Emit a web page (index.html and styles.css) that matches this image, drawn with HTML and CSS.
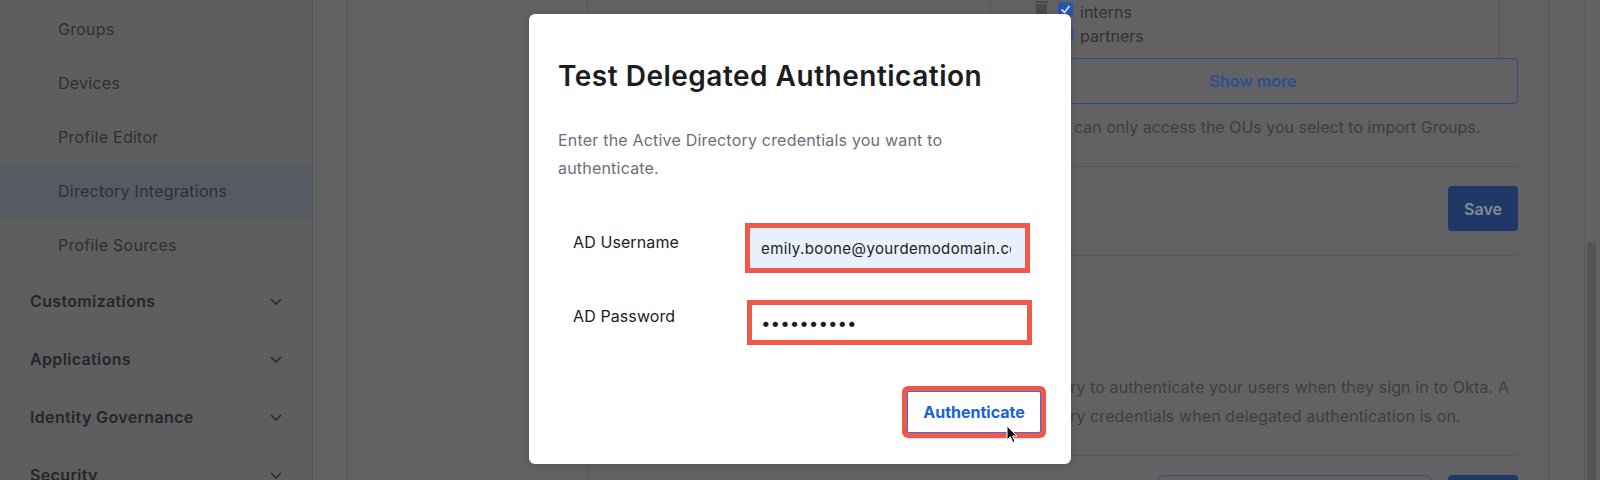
FILE: index.html
```html
<!DOCTYPE html>
<html lang="en">
<head>
<meta charset="utf-8">
<title>Directory Integrations</title>
<link rel="stylesheet" href="styles.css">
</head>
<body>
<div class="app">
  <nav class="sidebar">
    <ul class="nav-list">
      <li class="nav-sub">Groups</li>
      <li class="nav-sub">Devices</li>
      <li class="nav-sub">Profile Editor</li>
      <li class="nav-sub active">Directory Integrations</li>
      <li class="nav-sub">Profile Sources</li>
      <li class="nav-section"><span>Customizations</span><svg class="chev" width="12" height="7" viewBox="0 0 12 7"><polyline points="1,1 6,6 11,1"/></svg></li>
      <li class="nav-section"><span>Applications</span><svg class="chev" width="12" height="7" viewBox="0 0 12 7"><polyline points="1,1 6,6 11,1"/></svg></li>
      <li class="nav-section"><span>Identity Governance</span><svg class="chev" width="12" height="7" viewBox="0 0 12 7"><polyline points="1,1 6,6 11,1"/></svg></li>
      <li class="nav-section"><span>Security</span><svg class="chev" width="12" height="7" viewBox="0 0 12 7"><polyline points="1,1 6,6 11,1"/></svg></li>
    </ul>
  </nav>
  <div class="gutter"></div>
  <main class="main">
    <section class="card">
      <div class="card-left"></div>
      <div class="card-right">
        <div class="ou-list">
          <div class="ou-row"><span class="ou-icon"></span><span class="cb"></span><span>employees</span></div>
          <div class="ou-row">
            <svg class="ou-icon trash" width="15" height="15" viewBox="0 0 15 15"><rect x="1" y="0" width="13" height="2"/><rect x="2" y="3" width="11" height="12"/></svg>
            <span class="cb"><svg width="15" height="15" viewBox="0 0 15 15"><polyline points="3.5,7.5 6.5,10.5 11.5,4"/></svg></span>
            <span>interns</span>
          </div>
          <div class="ou-row">
            <span class="ou-icon"></span>
            <span class="cb"><svg width="15" height="15" viewBox="0 0 15 15"><polyline points="3.5,7.5 6.5,10.5 11.5,4"/></svg></span>
            <span>partners</span>
          </div>
        </div>
        <button class="show-more">Show more</button>
        <p class="help">The agent can only access the OUs you select to import Groups.</p>
        <hr class="rule">
        <div class="save-row"><button class="btn-primary">Save</button></div>
        <hr class="rule">
        <div class="da-section">
          <p class="da-text"><span class="line">Directory to authenticate your users when they sign in to Okta. A</span><span class="line">Directory credentials when delegated authentication is on.</span></p>
        </div>
        <hr class="rule">
        <div class="bottom-row"><div class="fake-input"></div><button class="btn-primary">Test</button></div>
      </div>
    </section>
  </main>
  <div class="scrollbar"><div class="thumb"></div></div>
</div>

<div class="modal" role="dialog">
  <h2 class="modal-title">Test Delegated Authentication</h2>
  <p class="modal-desc">Enter the Active Directory credentials you want to authenticate.</p>
  <div class="form-row">
    <label class="field-label" for="user">AD Username</label>
    <input class="field-input autofill" id="user" type="text" value="emily.boone@yourdemodomain.com">
  </div>
  <div class="form-row row-password">
    <label class="field-label" for="pass">AD Password</label>
    <input class="field-input pass" id="pass" type="password" value="password12">
  </div>
  <div class="modal-actions">
    <button class="btn-auth">Authenticate</button>
  </div>
</div>

<svg class="cursor" width="12" height="19" viewBox="0 0 12 19"><path d="M1 1 L1 15 L4.3 11.8 L6.8 17.5 L9 16.6 L6.6 11 L11 11 Z"/></svg>
</body>
</html>
```

FILE: styles.css
```css
* { box-sizing: border-box; }
html, body { margin: 0; padding: 0; }
body {
  width: 1600px;
  height: 480px;
  overflow: hidden;
  position: relative;
  background: #626264;
  font-family: Inter, "Noto Sans", sans-serif;
}

.app { display: flex; height: 480px; overflow: hidden; }

/* sidebar */
.sidebar {
  width: 313px;
  flex: none;
  background: #5e5e60;
  border-right: 1px solid #555557;
}
.nav-list { list-style: none; margin: 2px 0 0; padding: 0; }
.nav-sub {
  height: 54px;
  display: flex;
  align-items: center;
  padding-left: 58px;
  font-size: 16px;
  letter-spacing: 0.25px;
  color: #2f2f31;
}
.nav-sub.active { background: #565a62; }
.nav-section {
  height: 58px;
  display: flex;
  align-items: center;
  justify-content: space-between;
  padding: 0 30px;
  font-size: 16px;
  font-weight: 600;
  letter-spacing: 0.35px;
  color: #262628;
}
.chev polyline { fill: none; stroke: #2a2a2c; stroke-width: 1.6; }

.gutter { width: 35px; flex: none; border-right: 1px solid #58585a; }

/* main */
.main { flex: 1; display: flex; padding-left: 239px; }
.card {
  width: 962px;
  flex: none;
  display: flex;
  border-left: 1px solid #58585a;
  border-right: 1px solid #58585a;
}
.card-left { width: 400px; flex: none; }
.card-right { width: 530px; flex: none; display: flex; flex-direction: column; }
.card-right > * { flex-shrink: 0; }

.ou-list {
  margin: -40px 0 0 2px;
  width: 510px;
  height: 98px;
  padding-top: 16px;
  border-left: 1px solid #58585a;
  border-right: 1px solid #58585a;
  font-size: 16px;
  color: #323234;
}
.ou-row { height: 24px; display: flex; align-items: center; padding-left: 43px; }
.ou-icon { width: 15px; height: 15px; margin-right: 9px; margin-bottom: 8px; flex: none; }
.trash rect { fill: #4a4a4c; }
.cb {
  width: 15px;
  height: 15px;
  margin-right: 7px;
  margin-bottom: 5px;
  flex: none;
  background: #2755a8;
  border-radius: 2px;
  display: block;
}
.cb svg { display: block; }
.cb polyline { fill: none; stroke: #d6dbe4; stroke-width: 1.8; }

.show-more {
  width: 530px;
  height: 46px;
  background: transparent;
  border: 1px solid #2d4a88;
  border-radius: 4px;
  font-family: inherit;
  font-size: 16px;
  font-weight: 600;
  color: #2e4e90;
}
.help {
  margin: 11px 0 0 5px;
  font-size: 16px;
  line-height: 24px;
  color: #3e3e40;
  white-space: nowrap;
}
.rule { margin: 0; border: 0; border-top: 1px solid #58585a; height: 0; }
.help + .rule { margin-top: 27px; }
.save-row { display: flex; justify-content: flex-end; margin: 19px 0 24px; }
.btn-primary {
  width: 70px;
  height: 45px;
  border: 0;
  border-radius: 4px;
  background: #1f3868;
  color: #868c97;
  font-family: inherit;
  font-size: 16px;
  font-weight: 600;
}
.da-section { padding: 117px 0 0 27px; }
.da-text { margin: 0 0 24px; font-size: 16px; line-height: 29px; letter-spacing: 0.1px; color: #3e3e40; }
.da-text .line { display: block; white-space: nowrap; }
.bottom-row { display: flex; justify-content: flex-end; gap: 17px; margin-top: 19px; }
.fake-input { width: 272px; height: 45px; border: 1px solid #3a4f80; border-radius: 4px; }

.scrollbar { width: 16px; flex: none; border-left: 1px solid #58585a; padding: 242px 0 0 2px; }
.thumb { width: 9px; height: 238px; border-radius: 5px 5px 0 0; background: #545456; }

/* modal */
.modal {
  position: absolute;
  left: 529px;
  top: 14px;
  width: 542px;
  height: 450px;
  background: #fff;
  border-radius: 6px;
  padding: 45px 30px 31px 29px;
  box-shadow: 0 2px 8px rgba(0,0,0,0.15);
}
.modal-title {
  margin: 0 0 33px;
  font-size: 28px;
  line-height: 34px;
  font-weight: 600;
  letter-spacing: 0.5px;
  color: #1d1d21;
}
.modal-desc {
  margin: 0 0 45px;
  max-width: 410px;
  font-size: 16px;
  line-height: 28px;
  letter-spacing: 0.2px;
  color: #6e6e78;
}
.form-row { display: flex; padding-left: 15px; }
.row-password { margin-top: 35px; }
.field-label {
  width: 176px;
  flex: none;
  padding-top: 5px;
  font-size: 16px;
  line-height: 20px;
  letter-spacing: 0.1px;
  color: #1d1d21;
}
.row-password .field-label { padding-top: 2px; }
.field-input {
  width: 277px;
  height: 42px;
  padding: 0 14px 0 11px;
  border: 1px solid #f05847;
  border-radius: 0;
  box-shadow: 0 0 0 4px #f05847;
  font-family: inherit;
  font-size: 15px;
  letter-spacing: 0.4px;
  color: #1d1d21;
  outline: none;
}
.field-input.autofill { background: #e8f0fe; }
.field-input.pass {
  height: 37px;
  margin-left: 2px;
  padding-left: 9px;
  background: #fff;
  font-size: 17px;
  letter-spacing: 0;
}
.modal-actions { display: flex; justify-content: flex-end; margin-top: 50px; }
.btn-auth {
  width: 134px;
  height: 42px;
  background: #fff;
  border: 1px solid #3b6de0;
  border-radius: 2px;
  box-shadow: 0 0 0 5px #f05847, 0 7px 2px -1px rgba(120,150,230,0.35);
  font-family: inherit;
  font-size: 16px;
  font-weight: 700;
  color: #1662dd;
}

.cursor { position: absolute; left: 1006px; top: 425px; }
.cursor path { fill: #111; stroke: #fff; stroke-width: 1; }
```
